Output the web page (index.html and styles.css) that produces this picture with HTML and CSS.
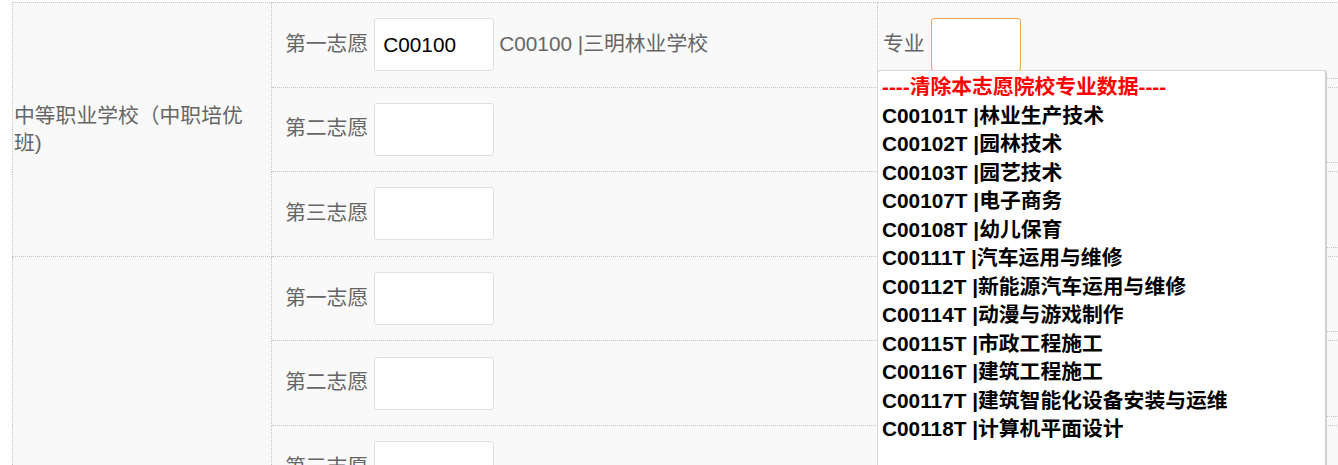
FILE: index.html
```html
<!DOCTYPE html>
<html lang="zh-CN">
<head>
<meta charset="utf-8">
<title>志愿填报</title>
<link rel="stylesheet" href="styles.css">
</head>
<body>
<div class="page">
  <table class="grid">
    <colgroup>
      <col class="c1">
      <col class="c2">
      <col class="c3">
    </colgroup>
    <tbody>
      <tr>
        <td class="school" rowspan="3">中等职业学校（中职培优班)</td>
        <td><div class="choice"><span class="label">第一志愿</span><span class="box">C00100</span><span class="picked">C00100 |三明林业学校</span></div></td>
        <td class="major-cell"><div class="choice narrow"><span class="label">专业</span><span class="box small focus"></span></div></td>
      </tr>
      <tr>
        <td><div class="choice"><span class="label">第二志愿</span><span class="box"></span></div></td>
        <td class="major-cell"><div class="choice narrow"></div></td>
      </tr>
      <tr>
        <td><div class="choice"><span class="label">第三志愿</span><span class="box"></span></div></td>
        <td class="major-cell"><div class="choice narrow"></div></td>
      </tr>
      <tr>
        <td class="school" rowspan="3"></td>
        <td><div class="choice"><span class="label">第一志愿</span><span class="box"></span></div></td>
        <td class="major-cell"><div class="choice narrow"></div></td>
      </tr>
      <tr>
        <td><div class="choice"><span class="label">第二志愿</span><span class="box"></span></div></td>
        <td class="major-cell"><div class="choice narrow"></div></td>
      </tr>
      <tr>
        <td><div class="choice"><span class="label">第三志愿</span><span class="box"></span></div></td>
        <td class="major-cell"><div class="choice narrow"></div></td>
      </tr>
    </tbody>
  </table>

  <ul class="dropdown">
    <li class="clear">----清除本志愿院校专业数据----</li>
    <li>C00101T |林业生产技术</li>
    <li>C00102T |园林技术</li>
    <li>C00103T |园艺技术</li>
    <li>C00107T |电子商务</li>
    <li>C00108T |幼儿保育</li>
    <li>C00111T |汽车运用与维修</li>
    <li>C00112T |新能源汽车运用与维修</li>
    <li>C00114T |动漫与游戏制作</li>
    <li>C00115T |市政工程施工</li>
    <li>C00116T |建筑工程施工</li>
    <li>C00117T |建筑智能化设备安装与运维</li>
    <li>C00118T |计算机平面设计</li>
  </ul>
</div>
</body>
</html>
```

FILE: styles.css
```css
html, body {
  margin: 0;
  padding: 0;
  background: #ffffff;
  overflow: hidden;
}

body {
  font-family: "Liberation Sans", "Noto Sans CJK SC", sans-serif;
  font-size: 20.8px;
  color: #666666;
}

.page {
  position: relative;
  padding: 2px 0 0 12px;
  height: 463px;
}

.grid {
  border-collapse: collapse;
  table-layout: fixed;
  width: 1466px;
  background: #f9f9f9;
}

.c1 { width: 259px; }
.c2 { width: 606px; }
.c3 { width: 601px; }

.grid td {
  border: 1px dotted #c4c4c4;
  padding: 0;
  vertical-align: middle;
}

.school {
  padding: 0 14px 0 1px !important;
  line-height: 27px;
  color: #666666;
}

.choice {
  height: 83.6px;
  display: flex;
  align-items: center;
  padding-left: 13px;
  gap: 6px;
  line-height: 25px;
}

.choice.narrow {
  position: relative;
  padding-left: 5px;
}

.choice.narrow::after {
  content: "";
  position: absolute;
  left: 0;
  right: 0;
  bottom: 8px;
  border-bottom: 1px dotted #c4c4c4;
}

.label {
  color: #666666;
  white-space: nowrap;
  padding-bottom: 3px;
}

.box {
  box-sizing: border-box;
  width: 120px;
  height: 53px;
  background: #ffffff;
  border: 1px solid #e0e0e0;
  border-radius: 3px;
  color: #000000;
  display: flex;
  align-items: center;
  padding-left: 8px;
}

.box.small {
  width: 90px;
}

.box.focus {
  border-color: #f5a54a;
}

.picked {
  margin-left: -1px;
  padding-bottom: 3px;
  color: #666666;
  white-space: nowrap;
}

.dropdown {
  position: absolute;
  left: 877px;
  top: 70px;
  width: 450px;
  height: 420px;
  margin: 0;
  padding: 2px 0 0 4px;
  list-style: none;
  background: #ffffff;
  border: 1px solid #d6d6d6;
  border-right: 2px solid #d0d0d0;
  border-radius: 3px 3px 0 0;
  font-weight: bold;
  color: #000000;
  line-height: 28.5px;
  box-sizing: border-box;
  z-index: 2;
}

.dropdown li {
  white-space: nowrap;
}

.dropdown .clear {
  color: #ff0000;
}
```
